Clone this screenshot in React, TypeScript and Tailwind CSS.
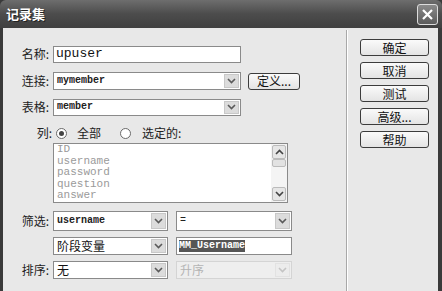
import React from 'react';

const cjk = { fontFamily: '"SimSun", "Noto Sans CJK SC", sans-serif' };
const mono = { fontFamily: '"Liberation Mono", "DejaVu Sans Mono", monospace' };

const Arrow: React.FC<{ disabled?: boolean }> = ({ disabled }) => (
  <div
    className={`flex h-full w-[15px] items-center justify-center border ${
      disabled ? 'border-[#e2e2e2] bg-[#ececec]' : 'border-[#c8c8c8] bg-[#dcdcdc]'
    }`}
  >
    <svg width="9" height="6" viewBox="0 0 9 6">
      <path d="M1 1 L4.5 4.5 L8 1" fill="none" stroke={disabled ? '#c4c4c4' : '#5a5a5a'} strokeWidth="1.6" />
    </svg>
  </div>
);

const Select: React.FC<{ w: string; h: string; children?: React.ReactNode; disabled?: boolean }> = ({
  w,
  h,
  children,
  disabled,
}) => (
  <div
    className={`flex ${w} ${h} items-stretch border ${
      disabled ? 'border-[#d4d4d4] bg-[#eeeeee]' : 'border-[#8a8a8a] bg-white'
    } p-[1px]`}
  >
    <div className="flex flex-1 items-center whitespace-nowrap pl-[2px] leading-[12px]">{children}</div>
    <Arrow disabled={disabled} />
  </div>
);

const Label: React.FC<{ children: React.ReactNode }> = ({ children }) => (
  <div className="w-[48px] shrink-0 pr-[2px] text-right text-[12px] text-[#222]" style={cjk}>
    {children}
  </div>
);

const Btn: React.FC<{ children: React.ReactNode; w?: string }> = ({ children, w = 'w-[69px]' }) => (
  <div
    className={`flex ${w} h-[17px] items-center justify-center rounded-[3px] border border-[#3c3c3c] bg-gradient-to-b from-[#fafafa] to-[#e4e4e4] text-[12px] leading-[14px] text-[#111]`}
    style={cjk}
  >
    {children}
  </div>
);

const Radio: React.FC<{ checked?: boolean }> = ({ checked }) => (
  <div className="flex h-[11px] w-[11px] items-center justify-center rounded-full border border-[#6a6a6a] bg-white">
    {checked && <div className="h-[5px] w-[5px] rounded-full bg-[#444]" />}
  </div>
);

const ScrollBtn: React.FC<{ up?: boolean }> = ({ up }) => (
  <div className="flex h-[14px] items-center justify-center rounded-[2px] border border-[#bbb] bg-[#e6e6e6]">
    <svg width="9" height="6" viewBox="0 0 9 6">
      <path d={up ? 'M1 5 L4.5 1.5 L8 5' : 'M1 1 L4.5 4.5 L8 1'} fill="none" stroke="#444" strokeWidth="1.6" />
    </svg>
  </div>
);

export default function App() {
  return (
    <div className="flex h-[291px] w-[442px] flex-col overflow-hidden bg-[#3a3a3a]">
      {/* title bar */}
      <div className="flex h-[28px] shrink-0 items-center justify-between rounded-t-[6px] bg-gradient-to-b from-[#6e6e6e] via-[#4c4c4c] to-[#404040] pl-[6px] pr-[4px]">
        <span className="text-[13px] font-bold text-white [text-shadow:1px_1px_0_#222]" style={cjk}>
          记录集
        </span>
        <div className="flex h-[21px] w-[21px] items-center justify-center rounded-[3px] border border-[#dcdcdc] bg-gradient-to-b from-[#8a8a8a] to-[#5c5c5c]">
          <svg width="13" height="13" viewBox="0 0 13 13">
            <path d="M2 2 L11 11 M11 2 L2 11" stroke="white" strokeWidth="2.2" />
          </svg>
        </div>
      </div>

      {/* body */}
      <div className="ml-[3px] mr-[4px] flex flex-1 bg-[#e8e8e8]">
        {/* form */}
        <div className="flex w-[343px] flex-col">
          <div className="mt-[17px] flex items-center">
            <Label>名称:</Label>
            <div
              className="ml-[2px] flex h-[17px] w-[188px] items-center border border-[#8a8a8a] bg-white pl-[2px] text-[13px] text-[#111]"
              style={mono}
            >
              upuser
            </div>
          </div>

          <div className="mt-[9px] flex items-center">
            <Label>连接:</Label>
            <div className="ml-[2px]">
              <Select w="w-[188px]" h="h-[18px]">
                <span className="text-[10px] font-bold text-[#222]" style={mono}>mymember</span>
              </Select>
            </div>
            <div className="ml-[7px]">
              <Btn w="w-[52px]">定义...</Btn>
            </div>
          </div>

          <div className="mt-[8px] flex items-center">
            <Label>表格:</Label>
            <div className="ml-[2px]">
              <Select w="w-[188px]" h="h-[17px]">
                <span className="text-[10px] font-bold text-[#222]" style={mono}>member</span>
              </Select>
            </div>
          </div>

          <div className="mt-[10px] flex h-[14px] items-center text-[12px] text-[#222]" style={cjk}>
            <div className="w-[49px] shrink-0 text-right">列:</div>
            <div className="ml-[4px]"><Radio checked /></div>
            <span className="ml-[10px]">全部</span>
            <div className="ml-[19px]"><Radio /></div>
            <span className="ml-[11px]">选定的:</span>
          </div>

          <div className="ml-[50px] mt-[3px] flex h-[60px] w-[235px] overflow-hidden border border-[#8a8a8a] bg-white">
            <div className="flex flex-1 flex-col pl-[3px] text-[11px] leading-[11.6px] text-[#9a9a9a]" style={mono}>
              <span>ID</span>
              <span>username</span>
              <span>password</span>
              <span>question</span>
              <span>answer</span>
            </div>
            <div className="flex w-[16px] flex-col bg-[#f4f4f4] p-[1px]">
              <ScrollBtn up />
              <div className="h-[8px] rounded-[2px] border border-[#bbb] bg-[#e2e2e2]" />
              <div className="flex-1" />
              <ScrollBtn />
            </div>
          </div>

          <div className="mt-[8px] flex items-center">
            <Label>筛选:</Label>
            <div className="ml-[2px]">
              <Select w="w-[115px]" h="h-[20px]">
                <span className="text-[10px] font-bold text-[#222]" style={mono}>username</span>
              </Select>
            </div>
            <div className="ml-[8px]">
              <Select w="w-[116px]" h="h-[20px]">
                <span className="text-[10px] text-[#222]" style={mono}>=</span>
              </Select>
            </div>
          </div>

          <div className="mt-[6px] flex items-center">
            <div className="w-[48px] shrink-0" />
            <div className="ml-[2px]">
              <Select w="w-[115px]" h="h-[18px]">
                <span className="text-[12px] text-[#111]" style={cjk}>阶段变量</span>
              </Select>
            </div>
            <div className="ml-[8px] flex h-[18px] w-[116px] items-center border border-[#8a8a8a] bg-white pl-[2px]">
              <span className="bg-[#555] text-[10px] font-bold leading-[12px] text-white" style={mono}>MM_Username</span>
            </div>
          </div>

          <div className="mt-[6px] flex items-center">
            <Label>排序:</Label>
            <div className="ml-[2px]">
              <Select w="w-[115px]" h="h-[18px]">
                <span className="text-[12px] text-[#111]" style={cjk}>无</span>
              </Select>
            </div>
            <div className="ml-[8px]">
              <Select w="w-[116px]" h="h-[18px]" disabled>
                <span className="text-[12px] text-[#b4b4b4]" style={cjk}>升序</span>
              </Select>
            </div>
          </div>
        </div>

        {/* separator */}
        <div className="mt-[2px] flex">
          <div className="w-[1px] bg-[#a8a8a8]" />
          <div className="w-[1px] bg-[#ffffff]" />
        </div>

        {/* buttons */}
        <div className="ml-[12px] mt-[11px] flex flex-col gap-[6px]">
          <Btn>确定</Btn>
          <Btn>取消</Btn>
          <Btn>测试</Btn>
          <Btn>高级...</Btn>
          <Btn>帮助</Btn>
        </div>
      </div>
    </div>
  );
}
